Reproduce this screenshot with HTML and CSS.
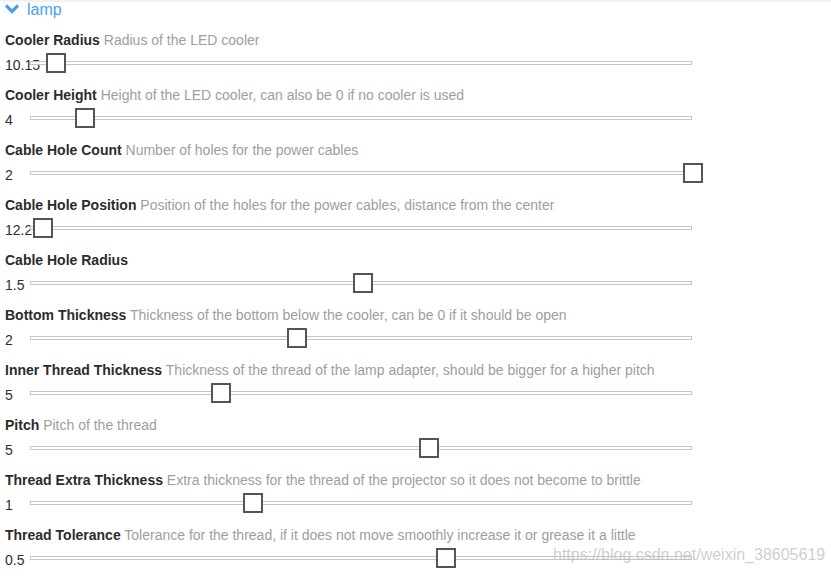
FILE: index.html
```html
<!DOCTYPE html>
<html>
<head>
<meta charset="utf-8">
<link rel="stylesheet" href="styles.css">
</head>
<body>
<div class="topshade"></div>
<div class="panel">
  <div class="group-head">
    <svg class="chev" width="14" height="10" viewBox="0 0 14 10"><path d="M1 1.5 L7 7.5 L13 1.5" fill="none" stroke="#4a9ff5" stroke-width="3.2"/></svg>
    <span class="group-title">lamp</span>
  </div>

  <div class="param">
    <div class="label"><b>Cooler Radius</b> <span class="desc">Radius of the LED cooler</span></div>
    <div class="control"><span class="value">10.15</span><div class="track"><div class="thumb" style="left:15px"></div></div></div>
  </div>
  <div class="param">
    <div class="label"><b>Cooler Height</b> <span class="desc">Height of the LED cooler, can also be 0 if no cooler is used</span></div>
    <div class="control"><span class="value">4</span><div class="track"><div class="thumb" style="left:44px"></div></div></div>
  </div>
  <div class="param">
    <div class="label"><b>Cable Hole Count</b> <span class="desc">Number of holes for the power cables</span></div>
    <div class="control"><span class="value">2</span><div class="track"><div class="thumb" style="left:652px"></div></div></div>
  </div>
  <div class="param">
    <div class="label"><b>Cable Hole Position</b> <span class="desc">Position of the holes for the power cables, distance from the center</span></div>
    <div class="control"><span class="value">12.2</span><div class="track"><div class="thumb" style="left:2px"></div></div></div>
  </div>
  <div class="param">
    <div class="label"><b>Cable Hole Radius</b></div>
    <div class="control"><span class="value">1.5</span><div class="track"><div class="thumb" style="left:322px"></div></div></div>
  </div>
  <div class="param">
    <div class="label"><b>Bottom Thickness</b> <span class="desc">Thickness of the bottom below the cooler, can be 0 if it should be open</span></div>
    <div class="control"><span class="value">2</span><div class="track"><div class="thumb" style="left:256px"></div></div></div>
  </div>
  <div class="param">
    <div class="label"><b>Inner Thread Thickness</b> <span class="desc">Thickness of the thread of the lamp adapter, should be bigger for a higher pitch</span></div>
    <div class="control"><span class="value">5</span><div class="track"><div class="thumb" style="left:180px"></div></div></div>
  </div>
  <div class="param">
    <div class="label"><b>Pitch</b> <span class="desc">Pitch of the thread</span></div>
    <div class="control"><span class="value">5</span><div class="track"><div class="thumb" style="left:388px"></div></div></div>
  </div>
  <div class="param">
    <div class="label"><b>Thread Extra Thickness</b> <span class="desc">Extra thickness for the thread of the projector so it does not become to brittle</span></div>
    <div class="control"><span class="value">1</span><div class="track"><div class="thumb" style="left:212px"></div></div></div>
  </div>
  <div class="param">
    <div class="label"><b>Thread Tolerance</b> <span class="desc">Tolerance for the thread, if it does not move smoothly increase it or grease it a little</span></div>
    <div class="control"><span class="value">0.5</span><div class="track"><div class="thumb" style="left:405px"></div></div></div>
  </div>
</div>
<div class="watermark">https://blog.csdn.net/weixin_38605619</div>
</body>
</html>
```

FILE: styles.css
```css
html, body {
  margin: 0;
  padding: 0;
  background: #fff;
  overflow: hidden;
}
body {
  font-family: "Liberation Sans", Arial, sans-serif;
  font-size: 14px;
  color: #333;
  width: 831px;
  height: 576px;
  position: relative;
}
.topshade {
  position: absolute;
  left: 0;
  right: 0;
  top: 0;
  height: 3px;
  background: linear-gradient(to bottom, rgba(0,0,0,0.07), rgba(0,0,0,0));
}
.panel {
  width: 831px;
}
.group-head {
  height: 30px;
  display: flex;
  align-items: flex-start;
  padding-left: 5px;
  box-sizing: border-box;
}
.chev {
  margin-top: 4px;
}
.group-title {
  color: #4a9ff5;
  font-size: 16px;
  line-height: 20px;
  margin-left: 8px;
}
.param {
  padding: 0 0 0 5px;
  height: 55px;
}
.label {
  line-height: 20px;
  height: 20px;
  white-space: nowrap;
  color: #2b2b2b;
}
.desc {
  color: #9e9e9e;
}
.control {
  display: flex;
  align-items: center;
  height: 26px;
  width: 687px;
}
.value {
  width: 25px;
  flex: none;
  white-space: nowrap;
  color: #2c2c3c;
  line-height: 16px;
  margin-top: 4px;
}
.track {
  flex: 1;
  height: 4px;
  box-sizing: border-box;
  border: 1px solid #c6c6c6;
  background: #fff;
  position: relative;
}
.thumb {
  position: absolute;
  top: -9px;
  width: 20px;
  height: 20px;
  box-sizing: border-box;
  border: 2px solid #555;
  background: #fff;
}
.watermark {
  position: absolute;
  left: 553px;
  top: 546px;
  font-size: 16px;
  color: rgba(190,190,190,0.75);
  white-space: nowrap;
}
```
